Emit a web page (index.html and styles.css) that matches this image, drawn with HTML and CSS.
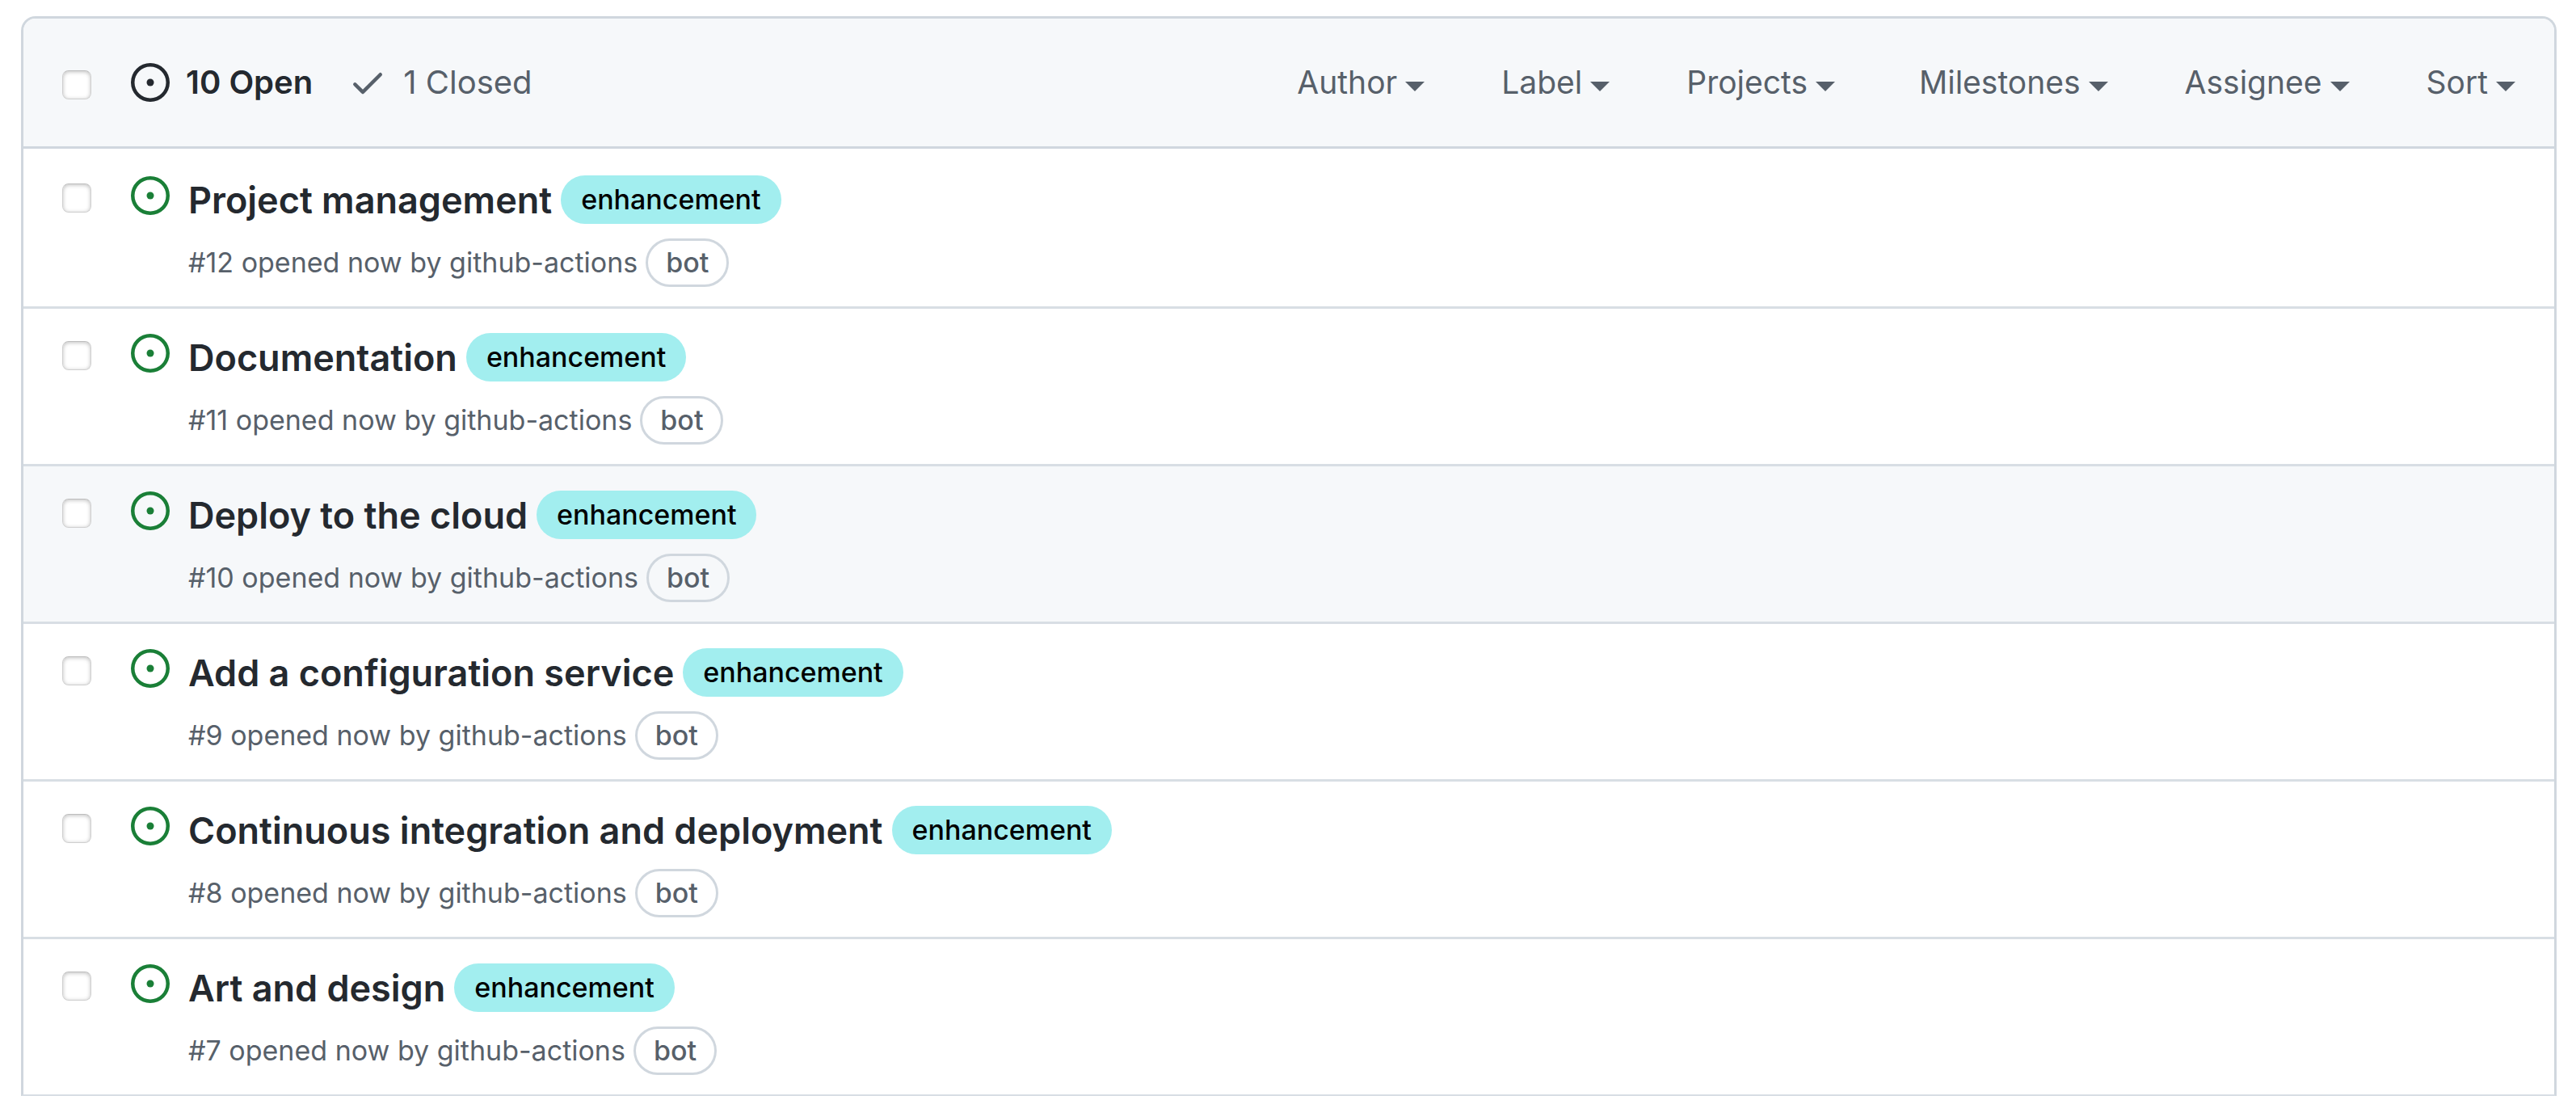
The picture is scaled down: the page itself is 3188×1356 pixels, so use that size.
FILE: index.html
```html
<!DOCTYPE html>
<html lang="en">
<head>
<meta charset="utf-8">
<title>Issues</title>
<meta name="viewport" content="width=device-width, initial-scale=1">
<link rel="stylesheet" href="styles.css">
</head>
<body>
<svg class="sprite" aria-hidden="true">
  <symbol id="issue-opened" viewBox="0 0 16 16">
    <path d="M8 9.5a1.5 1.5 0 1 0 0-3 1.5 1.5 0 0 0 0 3Z"/>
    <path fill-rule="evenodd" d="M8 0a8 8 0 1 1 0 16A8 8 0 0 1 8 0ZM1.5 8a6.5 6.5 0 1 0 13 0 6.5 6.5 0 0 0-13 0Z"/>
  </symbol>
  <symbol id="check" viewBox="0 0 16 16">
    <path d="M13.78 4.22a.75.75 0 0 1 0 1.06l-7.25 7.25a.75.75 0 0 1-1.06 0L2.22 9.28a.751.751 0 0 1 .018-1.042.751.751 0 0 1 1.042-.018L6 10.94l6.72-6.72a.75.75 0 0 1 1.06 0Z"/>
  </symbol>
</svg>
<main class="box">
  <header class="toolbar">
    <input class="tick" type="checkbox" aria-label="Select all issues">
    <nav class="states">
      <a class="state state-current" href="#open"><svg class="icon"><use href="#issue-opened"/></svg>10 Open</a>
      <a class="state" href="#closed"><svg class="icon"><use href="#check"/></svg>1 Closed</a>
    </nav>
    <div class="filters">
      <button class="filter" type="button">Author</button>
      <button class="filter" type="button">Label</button>
      <button class="filter filter-wide" type="button">Projects</button>
      <button class="filter" type="button">Milestones</button>
      <button class="filter" type="button">Assignee</button>
      <button class="filter" type="button">Sort</button>
    </div>
  </header>
  <ul class="issues">
    <li class="issue">
      <input class="tick" type="checkbox" aria-labelledby="issue-12">
      <svg class="icon icon-open"><use href="#issue-opened"/></svg>
      <div class="details">
        <div class="heading"><a class="title" id="issue-12" href="#12">Project management</a><a class="label" href="#enhancement">enhancement</a></div>
        <div class="meta"><span>#12 opened now by <a href="#github-actions">github-actions</a></span><span class="bot">bot</span></div>
      </div>
    </li>
    <li class="issue">
      <input class="tick" type="checkbox" aria-labelledby="issue-11">
      <svg class="icon icon-open"><use href="#issue-opened"/></svg>
      <div class="details">
        <div class="heading"><a class="title" id="issue-11" href="#11">Documentation</a><a class="label" href="#enhancement">enhancement</a></div>
        <div class="meta"><span>#11 opened now by <a href="#github-actions">github-actions</a></span><span class="bot">bot</span></div>
      </div>
    </li>
    <li class="issue issue-active">
      <input class="tick" type="checkbox" aria-labelledby="issue-10">
      <svg class="icon icon-open"><use href="#issue-opened"/></svg>
      <div class="details">
        <div class="heading"><a class="title" id="issue-10" href="#10">Deploy to the cloud</a><a class="label" href="#enhancement">enhancement</a></div>
        <div class="meta"><span>#10 opened now by <a href="#github-actions">github-actions</a></span><span class="bot">bot</span></div>
      </div>
    </li>
    <li class="issue">
      <input class="tick" type="checkbox" aria-labelledby="issue-9">
      <svg class="icon icon-open"><use href="#issue-opened"/></svg>
      <div class="details">
        <div class="heading"><a class="title" id="issue-9" href="#9">Add a configuration service</a><a class="label" href="#enhancement">enhancement</a></div>
        <div class="meta"><span>#9 opened now by <a href="#github-actions">github-actions</a></span><span class="bot">bot</span></div>
      </div>
    </li>
    <li class="issue">
      <input class="tick" type="checkbox" aria-labelledby="issue-8">
      <svg class="icon icon-open"><use href="#issue-opened"/></svg>
      <div class="details">
        <div class="heading"><a class="title" id="issue-8" href="#8">Continuous integration and deployment</a><a class="label" href="#enhancement">enhancement</a></div>
        <div class="meta"><span>#8 opened now by <a href="#github-actions">github-actions</a></span><span class="bot">bot</span></div>
      </div>
    </li>
    <li class="issue">
      <input class="tick" type="checkbox" aria-labelledby="issue-7">
      <svg class="icon icon-open"><use href="#issue-opened"/></svg>
      <div class="details">
        <div class="heading"><a class="title" id="issue-7" href="#7">Art and design</a><a class="label" href="#enhancement">enhancement</a></div>
        <div class="meta"><span>#7 opened now by <a href="#github-actions">github-actions</a></span><span class="bot">bot</span></div>
      </div>
    </li>
  </ul>
</main>
</body>
</html>
```
FILE: styles.css
```css
* {
  box-sizing: border-box;
}

body {
  margin: 0;
  padding: 20px 24px 0 26px;
  background: #fff;
  color: #24292f;
  font-family: Inter, "Liberation Sans", sans-serif;
  font-size: 40px;
  line-height: 62px;
}

a {
  color: inherit;
  text-decoration: none;
}

.sprite {
  display: none;
}

.box {
  border: 3px solid #d0d7de;
  border-bottom: 2px solid #d8dee4;
  border-radius: 18px 18px 0 0;
}

.toolbar {
  display: flex;
  align-items: center;
  padding: 48px;
  border-bottom: 3px solid #d0d7de;
  border-radius: 15px 15px 0 0;
  background: #f6f8fa;
  color: #57606a;
}

.tick {
  appearance: none;
  flex: none;
  width: 36px;
  height: 36px;
  margin: 6px 0 0;
  border: 1px solid #cfcfcf;
  border-top-color: #bdbdbd;
  border-radius: 8px;
  background: #fff;
  box-shadow: inset 0 1px 5px rgba(0, 0, 0, 0.25);
}

.icon {
  flex: none;
  width: 48px;
  height: 48px;
  fill: currentColor;
}

.states {
  display: flex;
  gap: 44px;
  margin-left: 49px;
}

.state {
  display: flex;
  align-items: center;
  gap: 20px;
}

.state-current {
  color: #24292f;
  font-weight: 600;
}

.filters {
  display: flex;
  gap: 95px;
  margin-left: auto;
  font-size: 39px;
}

.filter {
  display: flex;
  align-items: center;
  gap: 10px;
  padding: 0;
  border: 0;
  background: none;
  color: inherit;
  font: inherit;
}

.filter::after {
  content: "";
  margin-top: 10px;
  border: 12px solid transparent;
  border-top-color: currentColor;
  border-bottom: 0;
}

.filter-wide {
  margin-right: 9px;
}

.issues {
  margin: 0;
  padding: 0;
  list-style: none;
}

.issue {
  display: flex;
  align-items: flex-start;
  padding: 24px 48px;
}

.issue + .issue {
  padding-top: 21px;
  border-top: 3px solid #d8dee4;
}

.issue .tick {
  margin-top: 19px;
}

.issue .icon {
  margin: 10px 23px 0 49px;
}

.issue-active {
  background: #f6f8fa;
}

.icon-open {
  color: #1a7f37;
}

.heading {
  display: flex;
  align-items: center;
  gap: 11px;
  height: 78px;
}

.title {
  padding-top: 2px;
  font-size: 45px;
  font-weight: 600;
}

.label,
.bot {
  border-radius: 30px;
  font-weight: 500;
}

.label {
  padding: 0 25px;
  background: #a2eeef;
  color: #000;
  font-size: 34px;
  line-height: 60px;
}

.meta {
  display: flex;
  align-items: center;
  gap: 10px;
  height: 69px;
  padding-top: 9px;
  color: #57606a;
  font-size: 34px;
  line-height: 54px;
}

.bot {
  padding: 0 22px;
  border: 3px solid #d0d7de;
}
```
